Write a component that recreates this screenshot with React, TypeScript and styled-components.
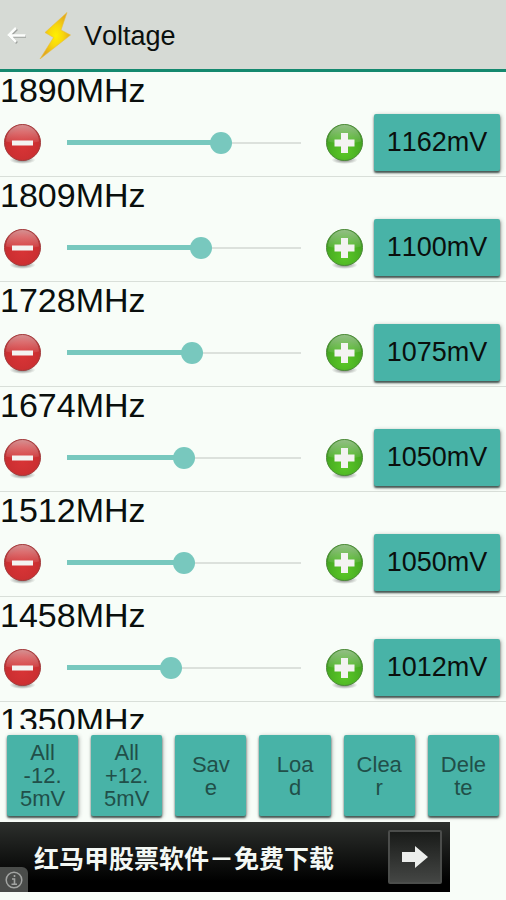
import React, { useState } from "react";
import styled, { createGlobalStyle } from "styled-components";

const MIN_MV = 700;
const MAX_MV = 1400;

const GlobalStyle = createGlobalStyle`
  *, *::before, *::after { box-sizing: border-box; }
  body {
    margin: 0;
    background: #f8fdf8;
    color: #0a0f0d;
    font-family: "Liberation Sans", Arial, "Noto Sans CJK SC", sans-serif;
    font-kerning: none;
  }
  button { font: inherit; font-kerning: none; color: inherit; border: 0; padding: 0; cursor: pointer; }
`;

const Screen = styled.div`
  display: flex;
  flex-direction: column;
  height: 100vh;
  padding-bottom: 8px;
`;

const Header = styled.header`
  display: flex;
  align-items: center;
  flex: none;
  height: 72px;
  padding-left: 6px;
  background: #d6dad5;
  border-bottom: 3px solid #15896f;
`;

const BackButton = styled.button`
  display: flex;
  background: none;
`;

const BoltIcon = styled.svg`
  margin: 0 8px 0 7px;
`;

const Title = styled.h1`
  margin: 0;
  padding-top: 2px;
  font-size: 27px;
  line-height: 32px;
  font-weight: 400;
`;

const List = styled.ul`
  flex: 1;
  min-height: 0;
  margin: 0;
  padding: 0;
  list-style: none;
  overflow-y: auto;
  scrollbar-width: none;
`;

const Row = styled.li`
  padding-bottom: 5px;
  border-bottom: 1px solid #d9dfd9;
`;

const Frequency = styled.label`
  display: block;
  margin-bottom: 6px;
  font-size: 34px;
  line-height: 36px;
`;

const Controls = styled.div`
  display: flex;
  align-items: center;
  padding: 0 6px 0 4px;
`;

const StepButton = styled.button`
  display: flex;
  flex: none;
  background: none;
`;

const Slider = styled.input`
  appearance: none;
  flex: 1;
  min-width: 0;
  height: 24px;
  margin: 0 14px;
  background:
    linear-gradient(#78c8be, #78c8be) 11px center / calc((100% - 22px) * var(--fill)) 5px no-repeat,
    linear-gradient(#dce1dc, #dce1dc) center / calc(100% - 22px) 2px no-repeat;

  &::-webkit-slider-thumb {
    appearance: none;
    width: 22px;
    height: 22px;
    border-radius: 50%;
    background: #78c8be;
  }
`;

const RaisedButton = styled.button`
  background: #48b3a7;
  border-radius: 2px;
  box-shadow: 0 2px 2px rgba(30, 50, 45, 0.75), 1px 1px 4px rgba(0, 0, 0, 0.3);
`;

const ValueButton = styled(RaisedButton)`
  flex: none;
  width: 126px;
  height: 57px;
  margin-left: 10px;
  font-size: 27px;
`;

const ActionBar = styled.div`
  display: grid;
  grid-template-columns: repeat(6, 1fr);
  gap: 13px;
  flex: none;
  padding: 6px 7px;
`;

const ActionButton = styled(RaisedButton)`
  height: 81px;
  padding: 0 12px;
  color: #214f49;
  font-size: 22px;
  line-height: 23px;
  overflow-wrap: anywhere;
`;

const Ad = styled.aside`
  position: relative;
  display: flex;
  align-items: center;
  justify-content: space-between;
  flex: none;
  width: 100%;
  max-width: 450px;
  height: 70px;
  padding: 0 8px 0 34px;
  background: linear-gradient(#2d302d, #000 85%);
  color: #f4f8f4;
`;

const AdLink = styled.a`
  color: inherit;
  font-family: "Noto Sans CJK SC", sans-serif;
  font-size: 25px;
  line-height: 36px;
  font-weight: 700;
  text-decoration: none;
  white-space: nowrap;
`;

const AdGo = styled.button`
  display: flex;
  align-items: center;
  justify-content: center;
  width: 54px;
  height: 54px;
  && { border: 2px solid #4b4d4b; }
  border-radius: 2px;
  background: linear-gradient(#191b19, #444644);
`;

const AdInfo = styled.button`
  position: absolute;
  left: 0;
  bottom: 0;
  display: flex;
  align-items: center;
  justify-content: center;
  width: 28px;
  height: 25px;
  border-radius: 0 6px 0 0;
  background: #4a4c4a;
`;

function GlossDefs() {
  return (
    <svg width="0" height="0" aria-hidden="true">
      <defs>
        <radialGradient id="red" cx="0.5" cy="0.6" r="0.6">
          <stop offset="0" stopColor="#d83436" />
          <stop offset="0.7" stopColor="#cb2f31" />
          <stop offset="1" stopColor="#b03335" />
        </radialGradient>
        <radialGradient id="green" cx="0.5" cy="0.75" r="0.7">
          <stop offset="0" stopColor="#5cc828" />
          <stop offset="0.65" stopColor="#48ad22" />
          <stop offset="1" stopColor="#3c8f22" />
        </radialGradient>
        <linearGradient id="gloss" x2="0" y2="1">
          <stop offset="0" stopColor="#fff" stopOpacity="0.45" />
          <stop offset="1" stopColor="#fff" stopOpacity="0.06" />
        </linearGradient>
        <radialGradient id="shade">
          <stop offset="0" stopColor="#222" stopOpacity="0.6" />
          <stop offset="1" stopColor="#222" stopOpacity="0" />
        </radialGradient>
        <radialGradient id="bolt" cx="0.52" cy="0.5" r="0.5">
          <stop offset="0" stopColor="#fff000" />
          <stop offset="0.45" stopColor="#f8d80c" />
          <stop offset="1" stopColor="#e3a91f" />
        </radialGradient>
      </defs>
    </svg>
  );
}

function StepIcon({ kind }: { kind: "minus" | "plus" }) {
  const plus = kind === "plus";
  return (
    <svg width="38" height="43" viewBox="0 0 38 43" aria-hidden="true">
      <ellipse cx="18.5" cy="39" rx="13" ry="4" fill="url(#shade)" />
      <circle cx="18.5" cy="21.5" r="18" fill={plus ? "url(#green)" : "url(#red)"} stroke={plus ? "#4c8a38" : "#a33c3d"} strokeWidth="1" />
      <path d="M2 20.500a16.500 16.500 0 0 1 33 0Q18.500 25 2 20.500z" fill="url(#gloss)" />
      <path
        d={plus ? "M15 12h7v6.500h6.500v7H22V32h-7v-6.500H8.500v-7H15z" : "M8 19.500h21v5H8z"}
        fill="#f3f3f1"
      />
    </svg>
  );
}

const initial = [
  { mhz: 1890, mv: 1162 },
  { mhz: 1809, mv: 1100 },
  { mhz: 1728, mv: 1075 },
  { mhz: 1674, mv: 1050 },
  { mhz: 1512, mv: 1050 },
  { mhz: 1458, mv: 1012 },
  { mhz: 1350, mv: 1000 },
];

const actions = ["All -12.5mV", "All +12.5mV", "Save", "Load", "Clear", "Delete"];

export default function App() {
  const [steps, setSteps] = useState(initial);

  const setVoltage = (mhz: number, mv: number) =>
    setSteps((all) =>
      all.map((s) => (s.mhz === mhz ? { ...s, mv: Math.min(MAX_MV, Math.max(MIN_MV, mv)) } : s)),
    );

  return (
    <Screen>
      <GlobalStyle />
      <GlossDefs />
      <Header>
        <BackButton aria-label="Back">
          <svg width="22" height="22" viewBox="0 0 22 22" fill="none" aria-hidden="true">
            <path d="M11 5 4 12l7 7M5 12.500h15" stroke="#9da19d" strokeWidth="2.5" />
            <path d="M10 4 3 11l7 7M3.500 11.500h16" stroke="#fbfdfb" strokeWidth="2.5" />
          </svg>
        </BackButton>
        <BoltIcon width="41" height="48" viewBox="0 0 41 48" aria-hidden="true">
          <path d="M32 1.500 10 21.500 18.500 26.500 5 48 35.500 24 26 19z" fill="url(#bolt)" stroke="#e8bd3c" strokeWidth="0.6" />
        </BoltIcon>
        <Title>Voltage</Title>
      </Header>
      <List>
        {steps.map(({ mhz, mv }) => (
          <Row key={mhz}>
            <Frequency htmlFor={`f${mhz}`}>{mhz}MHz</Frequency>
            <Controls>
              <StepButton aria-label={`Lower ${mhz}MHz`} onClick={() => setVoltage(mhz, mv - 12)}>
                <StepIcon kind="minus" />
              </StepButton>
              <Slider
                id={`f${mhz}`}
                type="range"
                min={MIN_MV}
                max={MAX_MV}
                value={mv}
                onChange={(e) => setVoltage(mhz, Number(e.target.value))}
                style={{ "--fill": (mv - MIN_MV) / (MAX_MV - MIN_MV) } as React.CSSProperties}
              />
              <StepButton aria-label={`Raise ${mhz}MHz`} onClick={() => setVoltage(mhz, mv + 12)}>
                <StepIcon kind="plus" />
              </StepButton>
              <ValueButton>{mv}mV</ValueButton>
            </Controls>
          </Row>
        ))}
      </List>
      <ActionBar>
        {actions.map((text) => (
          <ActionButton key={text}>{text}</ActionButton>
        ))}
      </ActionBar>
      <Ad>
        <AdLink href="#download">红马甲股票软件－免费下载</AdLink>
        <AdGo aria-label="Open">
          <svg width="26" height="24" viewBox="0 0 26 24" aria-hidden="true">
            <path d="M0 7h13V1l13 11-13 11v-6H0z" fill="#eceeec" />
          </svg>
        </AdGo>
        <AdInfo aria-label="Ad information">
          <svg width="18" height="18" viewBox="0 0 18 18" fill="none" stroke="#a2a4a2" aria-hidden="true">
            <circle cx="9" cy="9" r="7.800" strokeWidth="1.500" />
            <path d="M7 8h2.500v5M6.500 13.200h5.500M9.500 4v2" strokeWidth="1.600" />
          </svg>
        </AdInfo>
      </Ad>
    </Screen>
  );
}
